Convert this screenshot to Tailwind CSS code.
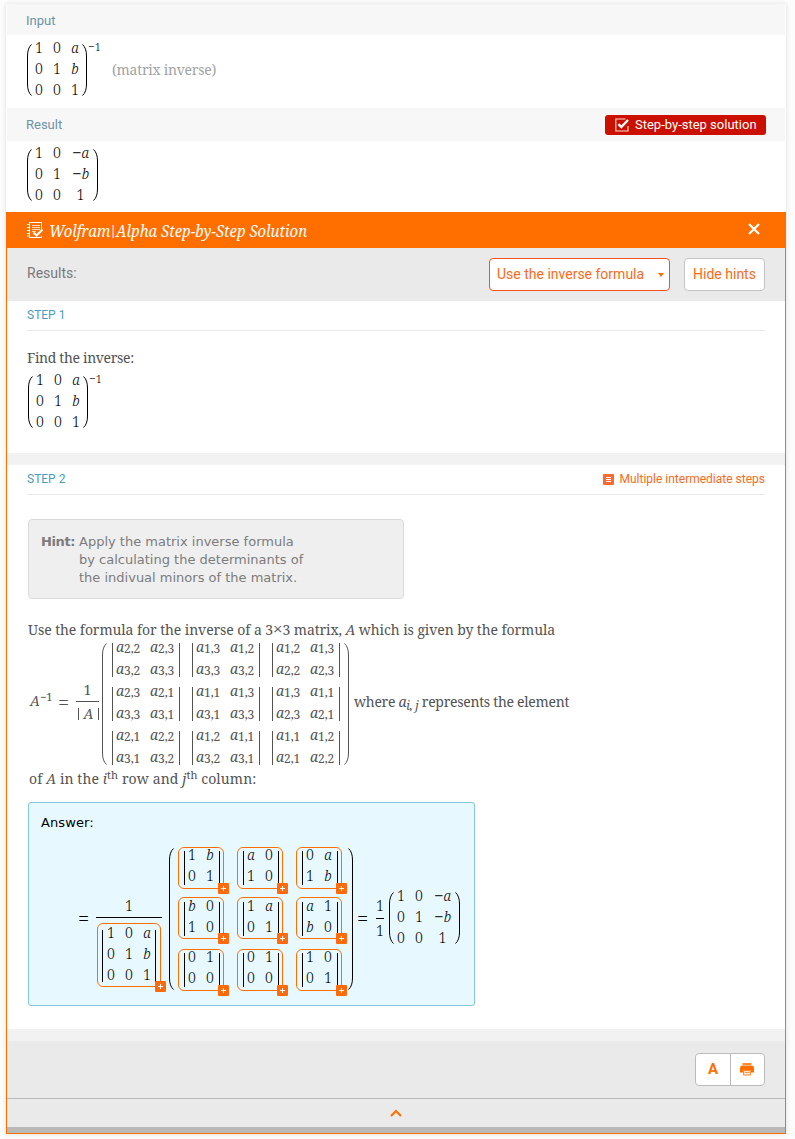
<!DOCTYPE html>
<html lang="en">
<head>
<meta charset="utf-8">
<title>Wolfram|Alpha Step-by-Step Solution</title>
<script src="https://cdn.jsdelivr.net/npm/@tailwindcss/browser@4"></script>
</head>
<body class="h-[1139px] overflow-hidden bg-[#fcfcfc] pl-[6px] pt-[4px] font-[Roboto,sans-serif]">
<main class="w-[780px] shadow-[0_0_5px_rgba(0,0,0,0.12)]">
  <section class="mx-px bg-white">
    <h2 class="flex h-[31px] items-center bg-[#f7f7f7] pl-[19px] pt-[2px] text-[13px] text-[#6c93a8]">Input</h2>
    <div class="flex h-[73px] pl-[20px] pt-[2px]">
      <div data-m="1 0 a|0 1 b|0 0 1"></div>
      <span class="mt-[3px] h-[14px] w-[14px] whitespace-nowrap font-['Noto_Serif','DejaVu_Serif_Condensed',serif] text-[11.5px] font-light leading-[14px] text-black">−1</span>
      <span class="ml-[10px] mt-[23px] whitespace-nowrap font-['Noto_Serif','DejaVu_Serif_Condensed',serif] text-[14px] leading-[20px] tracking-[-0.25px] text-[#a3a3a3]">(matrix inverse)</span>
    </div>
    <h2 class="flex h-[33px] items-center justify-between bg-[#f7f7f7] pl-[19px] pr-[19px] text-[13px] text-[#6c93a8]">Result
      <span class="mt-px flex h-5 w-[161px] items-center whitespace-nowrap rounded-[3px] bg-[#cb1000] pl-[10px] text-[13px] font-[450] text-white">
        <svg class="mr-[6px]" width="14" height="14" viewBox="0 0 14 14" fill="none"><path d="M10.5 1H.8v12H13V8" stroke="#ffd8d4" stroke-width="1.2"/><path d="M3.5 6.2 6.3 9 13 2" stroke="#fff" stroke-width="2.4"/></svg>Step-by-step solution</span>
    </h2>
    <div class="flex h-[71px] pl-[20px] pt-px"><div data-m="1 0 −a|0 1 −b|0 0 1" data-wide="1"></div></div>
  </section>

  <section class="h-[922px] border-x border-b border-[#ff6f00] bg-white">
    <header class="flex h-9 items-center bg-[#ff6f00] pl-[20px] pr-[25px] text-white">
      <svg width="16" height="16" viewBox="0 0 16 16" fill="none" stroke="#fff"><path d="M14.500 7.500V.5h-12v15h12V14" stroke-width="1"/><path d="M0 2.500h3M0 5.500h3M0 8.500h3M0 11.500h3M0 14h3" stroke-width="1"/><path d="M5 3.500h8M5 5.500h8M5 7.500h8M5 9.500h4" stroke-width="1" stroke-opacity=".75"/><path d="m6.500 10.500 3 3 6-6" stroke-width="2"/></svg>
      <span class="ml-[6px] mt-[2px] w-[260px] origin-left scale-x-[0.878] whitespace-nowrap font-['Noto_Serif','Liberation_Serif',serif] text-[17px] italic">Wolfram<span class="mx-[-1.5px] inline-block scale-y-75">|</span>Alpha Step-by-Step Solution</span>
      <svg class="-mt-[2px] ml-auto" width="12" height="12" viewBox="0 0 12 12"><path d="m1 1 10 10M11 1 1 11" stroke="#fff" stroke-width="2.200"/></svg>
    </header>
    <div class="flex h-[53px] items-center bg-[#eaeaea] pl-[20px] pr-[20px] text-[14px]">
      <span class="-mt-[2px] text-[#797979]">Results:</span>
      <button class="ml-auto flex h-[33px] w-[181px] items-center justify-between rounded-[4px] border border-[#f4511e] bg-white pl-[7px] pr-[5px] text-[#f96a20]">Use the inverse formula<svg width="6" height="4"><path d="M0 0h6L3 4z" fill="#ff6f00"/></svg></button>
      <button class="ml-[14px] h-[33px] w-[81px] rounded-[4px] border border-[#c4c4c4] bg-white text-[#f96a20]">Hide hints</button>
    </div>
    <section class="h-[152px] px-[20px] text-[#535353]">
      <h3 class="flex h-[30px] items-center border-b border-[#e9e9e9] pb-[2px] text-[12px] text-[#4a9cc0]">STEP 1</h3>
      <p class="mt-[17px] whitespace-nowrap font-['Noto_Serif','Liberation_Serif',serif] text-[14px] leading-[20px] tracking-[-0.33px]">Find the inverse:</p>
      <div class="mt-px flex pl-px"><div data-m="1 0 a|0 1 b|0 0 1"></div><span class="mt-[3px] h-[14px] whitespace-nowrap font-['Noto_Serif','DejaVu_Serif_Condensed',serif] text-[11.5px] font-light leading-[14px] text-black">−1</span></div>
    </section>
    <div class="h-3 bg-[#f2f2f2]"></div>
    <section class="h-[564px] px-[20px] text-[#535353]">
      <h3 class="flex h-[30px] items-center justify-between border-b border-[#e9e9e9] pb-[2px] text-[12px] text-[#4a9cc0]">STEP 2
        <span class="mt-px flex items-center text-[12px] text-[#f96a20]"><svg class="mr-[5px]" width="11" height="11"><rect width="11" height="11" rx="1" fill="#f96932"/><path d="M3 3.500h5M3 5.500h5M3 7.500h5" stroke="#fff"/></svg>Multiple intermediate steps</span></h3>
      <div class="ml-px mt-[24px] flex h-[80px] w-[376px] rounded-[4px] border border-[#dbdbdb] bg-[#efefef] pl-[12px] pt-[13px] font-['DejaVu_Sans',sans-serif] text-[13px] leading-[18px] text-[#7c7c7c]">
        <b class="w-[38px] tracking-[-0.4px]">Hint:</b><p>Apply the matrix inverse formula<br>by calculating the determinants of<br>the indivual minors of the matrix.</p>
      </div>
      <div class="pl-px font-['Noto_Serif','DejaVu_Serif_Condensed',serif] text-[14px]">
        <p class="mt-[21px] h-[20px] whitespace-nowrap leading-[20px] tracking-[-0.08px]">Use the formula for the inverse of a 3<span class="text-[17px] leading-0">×</span>3 matrix, <i>A</i> which is given by the formula</p>
        <div class="mt-[3px] flex h-[122px] items-center whitespace-nowrap">
          <div class="-mt-[7px] w-[26px] pl-[2px]"><i>A</i><sup class="text-[11px]">−1</sup></div>
          <span class="-mt-[2px] ml-[4px] w-[11px] text-[20px] font-light leading-[18px]">=</span>
          <div class="-mt-[5px] ml-[7px] flex w-[23px] flex-col items-center text-center"><span class="h-[23px] w-full border-b border-current">1</span><span class="flex h-[22px] w-full items-center justify-between pl-[2px] pt-px"><span class="mt-px h-[12px] w-px bg-current"></span><i>A</i><span class="mt-px h-[12px] w-px bg-current"></span></span></div>
          <div id="minors" class="ml-[3px] flex items-center"></div>
          <span class="-mt-[5px] ml-[4px] tracking-[-0.28px]">where <i>a</i><sub class="text-[12px] italic">i, j</sub> represents the element</span>
        </div>
        <p class="mt-[4px] h-[20px] whitespace-nowrap pl-px leading-[20px] tracking-[0.1px]">of <i>A</i> in the <i>i</i><sup class="text-[11px] leading-0">th</sup> row and <i>j</i><sup class="text-[11px] leading-0">th</sup> column:</p>
      </div>
      <div class="ml-px mt-[13px] h-[204px] w-[447px] rounded-[3px] border border-[#81c7dd] bg-[#e7f9ff] text-black">
        <p class="pl-[12px] pt-[11px] font-['DejaVu_Sans',sans-serif] text-[13px] leading-[18px] tracking-[0.1px]">Answer:</p>
        <div class="mt-[15px] flex h-[144px] pl-[49px] font-['Noto_Serif','DejaVu_Serif_Condensed',serif] text-[14px] font-light">
          <span class="mt-[62px] w-[10px] text-[20px] leading-[20px]">=</span>
          <div class="ml-[8px] mt-[48px] flex w-[66px] flex-col items-center"><span class="flex h-[23px] w-full justify-center border-b border-black leading-[22px]">1</span>
            <div class="relative mt-[5px] flex h-[64px] w-[64px] rounded-[6px] border border-[#ff6f00] pl-[4px]" data-box="1 0 a|0 1 b|0 0 1"></div></div>
          <div id="answer" class="ml-[7px] flex"></div>
          <span class="ml-[4px] mt-[62px] w-[11px] text-[20px] leading-[20px]">=</span>
          <div class="ml-[8px] mt-[49px] flex w-[8px] flex-col items-center"><span class="flex h-[23px] w-full justify-center border-b border-black leading-[20px]">1</span><span class="leading-[23px]">1</span></div>
          <div class="ml-[5px] mt-[38px]"><div data-m="1 0 −a|0 1 −b|0 0 1" data-wide="1"></div></div>
        </div>
      </div>
    </section>
    <div class="h-3 bg-[#f2f2f2]"></div>
    <div class="flex h-[57px] items-center justify-end bg-[#eaeaea] pr-[20px]">
      <div class="flex h-[33px] w-[70px] rounded-[4px] border border-[#bbb] bg-white">
        <span class="flex w-[35px] items-center justify-center border-r border-[#bbb] text-[15px] font-bold text-[#ff6f00]">A</span>
        <span class="flex flex-1 items-center justify-center pr-px"><svg width="14" height="13" viewBox="0 0 14 13"><path d="M2.500 0h9v2h-9z" fill="#ff8b33"/><path d="M2 2.500h10Q14 2.500 14 5v4.500H0V5Q0 2.500 2 2.500z" fill="#ff6f00"/><path d="M3 7h8v5.500H3z" fill="#ffe3cf"/><path d="M3.500 7.500h7v4.500h-7z" fill="none" stroke="#ff8b33"/><path d="M5 9.500h4" stroke="#ff9a4d"/></svg></span>
      </div>
    </div>
    <div class="flex h-[29px] items-center justify-center border-t border-[#b9b9b9] bg-[#eaeaea]"><svg width="12" height="8"><path d="m1 7 5-5 5 5" fill="none" stroke="#ff6f00" stroke-width="2"/></svg></div>
    <div class="h-[6px] bg-[#b9b9b9]"></div>
  </section>
</main>
<script>
const paren = (h, right) => `<svg class="shrink-0" width="6" height="${h}" viewBox="0 0 6 ${h}" fill="none" stroke="currentColor"><path d="${right ? `M.5 .5Q4.500 4 4.500 12V${h-12}Q4.500 ${h-4} .5 ${h-.5}` : `M4.500 .5Q.5 4 .5 12V${h-12}Q.5 ${h-4} 4.500 ${h-.5}`}"/></svg>`;
const cell = t => `<span class="flex justify-center whitespace-nowrap">${t.replace('−', '<span class="text-[17px]">−</span>').replace(/([ab])$/, '<i>$1</i>')}</span>`;
const cells = s => s.split('|').flatMap(r => r.split(' ')).map(cell).join('');
document.querySelectorAll('[data-m]').forEach(e => {
  const cols = e.dataset.wide ? 'grid-cols-[8px_8px_19px]' : 'grid-cols-[8px_8px_8px]';
  e.className = 'flex h-[63px] font-[\'Noto_Serif\',\'DejaVu_Serif_Condensed\',serif] text-[14px] font-light leading-[21px] text-black';
  e.innerHTML = `<div class="mt-[7px]">${paren(52)}</div><div class="ml-[2px] mr-[3px] grid ${cols} gap-x-[10px]">${cells(e.dataset.m)}</div><div class="mt-[7px]">${paren(52, true)}</div>`;
});
const plus = '<svg class="absolute -bottom-[6px] -right-[6px]" width="11" height="11"><rect width="11" height="11" rx="1" fill="#ff6a0d"/><path d="M5.500 3v5M3 5.500h5" stroke="#fff"/></svg>';
document.querySelectorAll('[data-box]').forEach(e => {
  e.innerHTML = `<i class="mt-[6px] h-[52px] w-px bg-black"></i><div class="-mt-[2px] ml-[4px] grid h-[63px] grid-cols-[8px_8px_8px] gap-x-[10px] leading-[21px]">${cells(e.dataset.box)}</div><i class="ml-[4px] mt-[6px] h-[52px] w-px bg-black"></i>${plus}`;
});
const minors = ['22 23 32 33','13 12 33 32','12 13 22 23','23 21 33 31','11 13 31 33','13 11 23 21','21 22 31 32','12 11 32 31','11 12 21 22'];
document.getElementById('minors').innerHTML = paren(122) + '<div class="ml-[4px] mr-[4px] grid grid-cols-3 gap-x-[12px] gap-y-[10px]">' + minors.map(m =>
  '<div class="h-[34px] w-[68px] border-x border-current pl-[3px] leading-[18px]"><div class="-mt-[5px] grid grid-cols-[23px_23px] gap-x-[11px]">' +
  m.split(' ').map(p => `<span class="flex h-[22px] whitespace-nowrap"><i>a</i><span class="translate-y-[2px] text-[12px] tracking-[-0.1px]">${p[0]},${p[1]}</span></span>`).join('') + '</div></div>').join('') + '</div>' + paren(122, true);
const dets = ['1 b|0 1','a 0|1 0','0 a|1 b','b 0|1 0','1 a|0 1','a 1|b 0','0 1|0 0','0 1|0 0','1 0|0 1'];
document.getElementById('answer').innerHTML = `<div class="mt-px">${paren(142)}</div><div class="ml-[3px] mr-[6px] grid h-[144px] grid-cols-3 grid-rows-[50px_52px_42px] gap-x-[13px]">` + dets.map((d, i) =>
  `<div class="relative flex h-[42px] w-[46px] rounded-[6px] border border-[#ff6f00] pl-[5px]"><i class="${i > 2 && i < 6 ? 'mt-[4px]' : 'mt-[3px]'} h-[34px] w-px bg-black"></i><div class="${i > 2 && i < 6 ? '-mt-[3px]' : '-mt-[4px]'} ml-[3px] grid h-[42px] grid-cols-[8px_8px] gap-x-[10px] leading-[21px]">${cells(d)}</div><i class="${i > 2 && i < 6 ? 'mt-[4px]' : 'mt-[3px]'} ml-[5px] h-[34px] w-px bg-black"></i>${plus}</div>`).join('') + `</div><div class="-mr-px mt-px">${paren(142, true)}</div>`;
</script>
</body>
</html>
